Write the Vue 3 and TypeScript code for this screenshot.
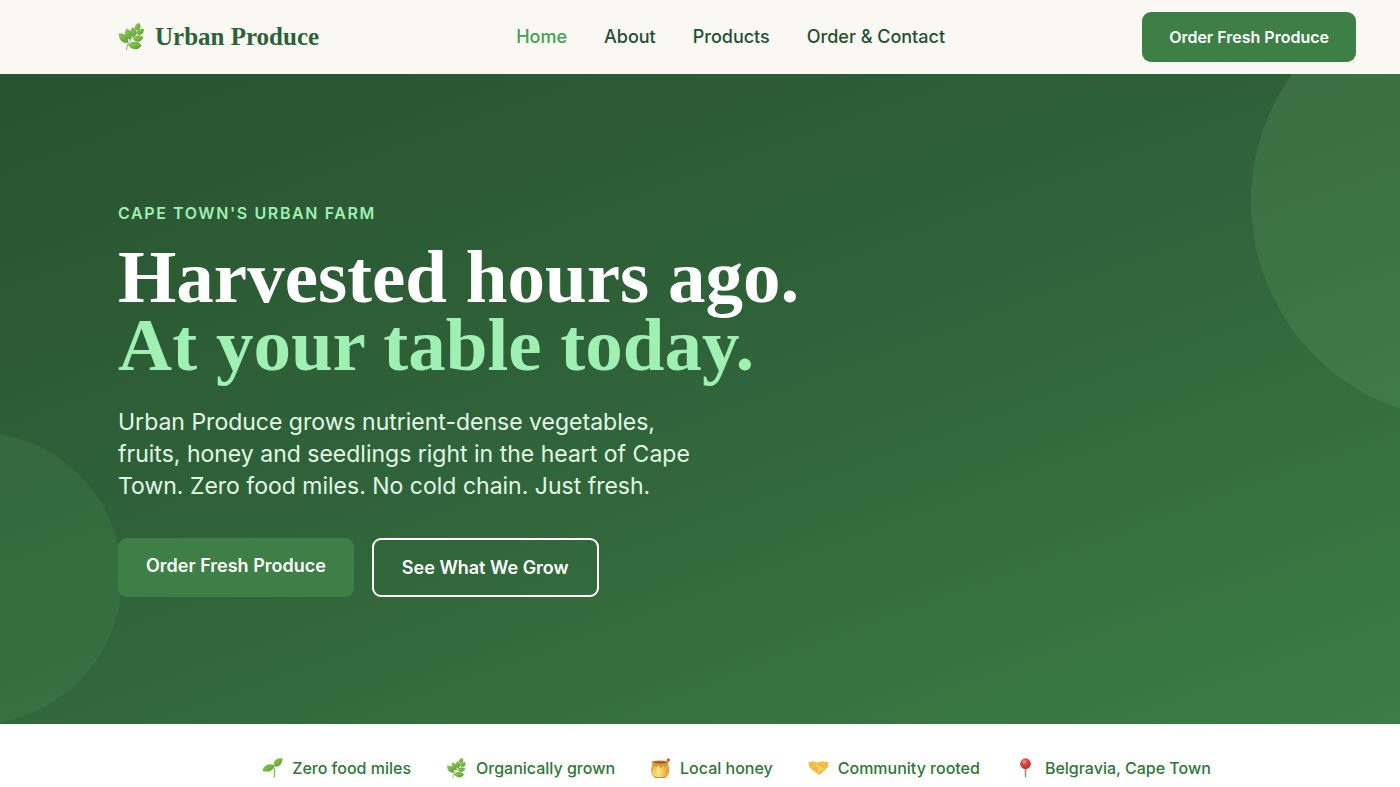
<script setup lang="ts">
import { ref } from 'vue'

type IconName = 'sprout' | 'herb' | 'honey' | 'hands' | 'pin'

interface NavLink {
  label: string
  href: string
}

interface TrustItem {
  icon: IconName
  label: string
}

const links: NavLink[] = [
  { label: 'Home', href: '#home' },
  { label: 'About', href: '#about' },
  { label: 'Products', href: '#products' },
  { label: 'Order & Contact', href: '#order' },
]

const trustItems: TrustItem[] = [
  { icon: 'sprout', label: 'Zero food miles' },
  { icon: 'herb', label: 'Organically grown' },
  { icon: 'honey', label: 'Local honey' },
  { icon: 'hands', label: 'Community rooted' },
  { icon: 'pin', label: 'Belgravia, Cape Town' },
]

const current = ref('Home')
</script>

<template>
  <div class="page">
    <svg class="defs" aria-hidden="true">
      <defs>
        <linearGradient id="leafFill" x1="0" y1="0" x2="1" y2="1">
          <stop offset="0" stop-color="#8fcb55" />
          <stop offset="1" stop-color="#57982f" />
        </linearGradient>
        <linearGradient id="honeyFill" x1="0" y1="0" x2="1" y2="0">
          <stop offset="0" stop-color="#dfa03a" />
          <stop offset="0.4" stop-color="#ffe682" />
          <stop offset="1" stop-color="#dc9a30" />
        </linearGradient>
        <radialGradient id="pinFill" cx="0.38" cy="0.32" r="0.7">
          <stop offset="0" stop-color="#f59a90" />
          <stop offset="0.4" stop-color="#d94b42" />
          <stop offset="1" stop-color="#b83430" />
        </radialGradient>
        <symbol id="herb" viewBox="0 0 78 82">
          <path d="M24 80C25 62 38 48 49 36C56 27 60 18 61 10" fill="none" stroke="#83a85c" stroke-width="3" stroke-linecap="round" />
          <g fill="url(#leafFill)">
            <path d="M63 0C71 12 64 21 51 22C46 10 52 2 63 0Z" />
            <path d="M77 19C76 36 64 40 53 33C55 19 65 15 77 19Z" />
            <path d="M43 12C56 21 56 35 46 44C33 37 31 24 43 12Z" />
            <path d="M24 17C41 25 43 40 35 51C19 46 15 31 24 17Z" />
            <path d="M75 44C67 61 53 59 43 49C52 34 64 35 75 44Z" />
            <path d="M0 31C20 29 31 42 28 60C9 62 0 49 0 31Z" />
            <path d="M70 68C58 86 40 82 28 67C41 51 60 54 70 68Z" />
          </g>
          <path d="M6 37L25 57M27 24L34 47M44 20L45 40M70 46L47 48M64 68L32 66M72 23L56 31M60 5L53 19" fill="none" stroke="#a9d479" stroke-width="1" />
        </symbol>
        <symbol id="sprout" viewBox="0 0 60 60">
          <path d="M35 57C39 42 36 33 32 24" fill="none" stroke="#86bd4a" stroke-width="4" stroke-linecap="round" />
          <path d="M34 25C31 6 44 0 60 1C59 20 49 29 34 25Z" fill="url(#leafFill)" />
          <path d="M35 23C24 15 4 18 0 39C17 44 31 39 35 23Z" fill="url(#leafFill)" />
          <path d="M37 22L54 6M30 26L7 36" fill="none" stroke="#a8d46c" stroke-width="1" />
        </symbol>
        <symbol id="honey" viewBox="0 0 60 60">
          <path d="M38 17L52 7" stroke="#a86c3e" stroke-width="3" />
          <path d="M48 3L56 1L59 7L53 12Z" fill="#a66545" />
          <path d="M7 18C-1 29 0 47 10 57C20 61 39 61 48 57C58 47 59 29 51 18Z" fill="url(#honeyFill)" />
          <path d="M4 10C9 7 48 7 54 10L53 18C44 22 14 22 5 18Z" fill="#cf9440" />
          <path d="M8 12C18 10 39 10 50 12C47 17 12 17 8 12Z" fill="#8f521f" />
          <path d="M7 19C17 22 42 22 51 19L53 24C49 27 48 23 45 24C43 33 40 27 38 24C34 22 34 33 30 31C27 29 29 24 25 23C20 22 21 28 17 27C14 23 12 28 5 24Z" fill="#d9952b" />
          <path d="M9 36C8 46 12 51 17 54" fill="none" stroke="#fff0a5" stroke-width="3" />
          <path d="M12 57C24 60 37 60 46 57" fill="none" stroke="#b37a3a" stroke-width="3" />
        </symbol>
        <symbol id="hands" viewBox="0 0 62 42">
          <path d="M1 4L14 1L28 5L39 1L60 4C62 10 60 17 55 22L39 37C36 41 31 41 28 38L10 25C5 20 1 11 1 4Z" fill="#f2c14c" />
          <path d="M27 6L19 17C24 21 29 18 34 13L52 25C50 29 46 28 43 25C45 31 42 33 37 29C39 35 35 38 30 33" fill="#fbd768" stroke="#cb9532" stroke-width="1" />
          <path d="M11 23L17 18L20 23L24 23L25 28L29 29L30 34L33 36M42 25L34 19M37 29L29 23M14 3L6 20M50 3L57 20" fill="none" stroke="#cc9734" stroke-width="1" stroke-linejoin="round" />
        </symbol>
        <symbol id="pin" viewBox="0 0 60 60">
          <path d="M27 29H33L32 56L30 59L28 56Z" fill="#8f8a8b" />
          <path d="M31 31V54" stroke="#c7c4c5" stroke-width="1" />
          <circle cx="30" cy="17" r="16" fill="url(#pinFill)" />
        </symbol>
      </defs>
    </svg>

    <header class="header">
      <a class="brand" href="#home">
        <svg class="brand-icon" aria-hidden="true"><use href="#herb" /></svg>
        <span>Urban Produce</span>
      </a>
      <nav class="nav" aria-label="Main">
        <a
          v-for="link in links"
          :key="link.label"
          :href="link.href"
          :class="{ active: current === link.label }"
          @click="current = link.label"
        >{{ link.label }}</a>
      </nav>
      <a class="button button-small" href="#order">Order Fresh Produce</a>
    </header>

    <main class="hero">
      <div class="circle circle-right"></div>
      <div class="circle circle-left"></div>
      <div class="content">
        <p class="eyebrow">CAPE TOWN'S URBAN FARM</p>
        <h1>Harvested hours ago.<br><span>At your table today.</span></h1>
        <p class="lead">
          Urban Produce grows nutrient-dense vegetables, fruits, honey and
          seedlings right in the heart of Cape Town. Zero food miles. No cold
          chain. Just fresh.
        </p>
        <div class="actions">
          <a class="button" href="#order">Order Fresh Produce</a>
          <a class="button button-outline" href="#products">See What We Grow</a>
        </div>
      </div>
    </main>

    <ul class="trust">
      <li v-for="item in trustItems" :key="item.label">
        <svg class="trust-icon" aria-hidden="true"><use :href="'#' + item.icon" /></svg>
        <span>{{ item.label }}</span>
      </li>
    </ul>
  </div>
</template>

<style>
body {
  margin: 0;
}
</style>

<style scoped>
.page {
  display: flex;
  flex-direction: column;
  min-height: 100vh;
  background: #ffffff;
  color: #1f5130;
  font-family: Inter, "Liberation Sans", sans-serif;
}

.defs {
  position: absolute;
  width: 0;
  height: 0;
}

a {
  color: inherit;
  text-decoration: none;
}

.header {
  display: flex;
  align-items: center;
  justify-content: space-between;
  box-sizing: border-box;
  min-height: 74px;
  padding: 0 44px 1px 118px;
  background: #faf8f3;
}

.brand {
  display: flex;
  align-items: center;
  gap: 10px;
  color: #2d6237;
  font: 700 25px/36px "Liberation Serif", serif;
}

.brand-icon {
  width: 27px;
  height: 27px;
}

.nav {
  display: flex;
  gap: 37px;
  font-size: 18px;
  font-weight: 500;
  line-height: 28px;
}

.nav .active {
  color: #46a054;
}

.button {
  padding: 14px 28px;
  border-radius: 9px;
  background: #3d7f45;
  color: #ffffff;
  font-size: 18px;
  font-weight: 600;
  line-height: 27px;
}

.button-small {
  padding: 13px 27px;
  font-size: 16px;
  line-height: 24px;
}

.button-outline {
  border: 2px solid #ffffff;
  background: transparent;
}

.hero {
  position: relative;
  display: flex;
  flex: 1;
  align-items: center;
  overflow: hidden;
  padding: 48px 118px;
  background: linear-gradient(160deg, #28532f 0%, #30643a 50%, #3b7d45 100%);
}

.circle {
  position: absolute;
  border-radius: 50%;
}

.circle-right {
  top: -91px;
  right: -288px;
  width: 437px;
  height: 437px;
  background: rgba(130, 195, 125, 0.14);
}

.circle-left {
  bottom: 0;
  left: -170px;
  width: 292px;
  height: 292px;
  background: rgba(90, 180, 100, 0.14);
}

.content {
  position: relative;
}

.eyebrow {
  margin: 0 0 18px;
  color: #9ff0b2;
  font-size: 16px;
  font-weight: 600;
  line-height: 24px;
  letter-spacing: 0.1em;
}

h1 {
  margin: 0 0 27px;
  color: #ffffff;
  font: 700 75px/68px "Liberation Serif", serif;
}

h1 span {
  color: #9ff0b2;
}

.lead {
  max-width: 580px;
  margin: 0 0 36px;
  color: #e2f8e7;
  font-size: 23px;
  line-height: 32px;
}

.actions {
  display: flex;
  gap: 18px;
}

.trust {
  display: flex;
  justify-content: center;
  gap: 35px;
  margin: 0;
  padding: 32px 0 7px 73px;
  color: #2f7639;
  font-size: 16px;
  font-weight: 500;
  line-height: 24px;
  list-style: none;
}

.trust li {
  display: flex;
  align-items: center;
  gap: 9px;
}

.trust-icon {
  width: 21px;
  height: 20px;
}
</style>
